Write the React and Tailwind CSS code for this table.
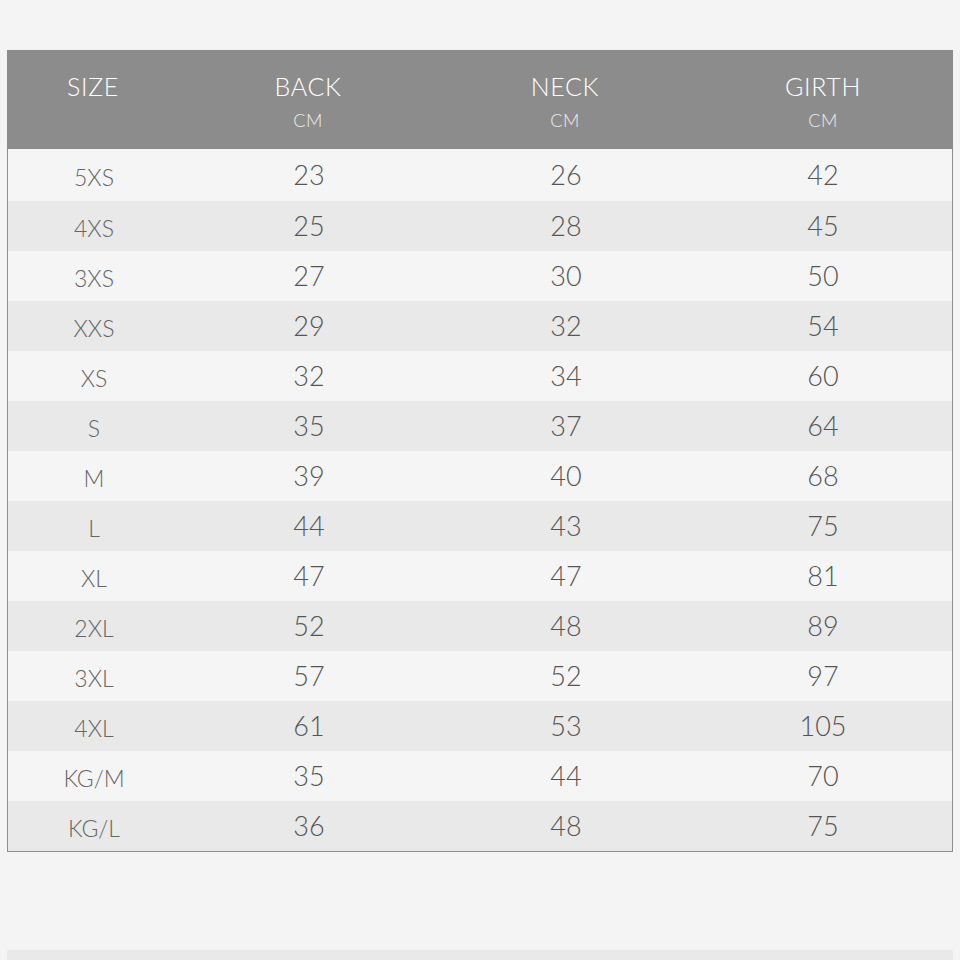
import React from 'react';

const rows = [
  ['5XS', 23, 26, 42],
  ['4XS', 25, 28, 45],
  ['3XS', 27, 30, 50],
  ['XXS', 29, 32, 54],
  ['XS', 32, 34, 60],
  ['S', 35, 37, 64],
  ['M', 39, 40, 68],
  ['L', 44, 43, 75],
  ['XL', 47, 47, 81],
  ['2XL', 52, 48, 89],
  ['3XL', 57, 52, 97],
  ['4XL', 61, 53, 105],
  ['KG/M', 35, 44, 70],
  ['KG/L', 36, 48, 75],
];

const cols = 'grid grid-cols-[172px_258px_256px_1fr]';

export default function App() {
  return (
    <div className="w-[960px] h-[960px] bg-[#f4f4f4] pt-[50px] px-[7px] overflow-hidden font-['Lato',sans-serif]">
      <div className="w-[946px] border-x border-b border-[#8e8e8e]">
        {/* header */}
        <div className={`${cols} h-[99px] bg-[#8c8c8c] text-white -mx-px`}>
          <div className="flex justify-center pt-[20px] text-[25px] font-light leading-[32px] tracking-wide">SIZE</div>
          {['BACK', 'NECK', 'GIRTH'].map((h) => (
            <div key={h} className="flex flex-col items-center pt-[20px]">
              <span className="text-[25px] font-light leading-[32px] tracking-wide">{h}</span>
              <span className="text-[18px] font-light leading-[20px] mt-[8px] text-[#ececec] tracking-wide">CM</span>
            </div>
          ))}
        </div>

        {/* rows */}
        {rows.map((r, i) => (
          <div
            key={r[0]}
            className={`${cols} ${i === 0 ? 'h-[52px]' : 'h-[50px]'} items-center ${i % 2 === 0 ? 'bg-[#f5f5f5]' : 'bg-[#e9e9e9]'}`}
          >
            <div className="text-center text-[23px] font-light text-[#666] pt-[4px]">{r[0]}</div>
            <div className="text-center text-[27px] font-light text-[#555]">{r[1]}</div>
            <div className="text-center text-[27px] font-light text-[#555]">{r[2]}</div>
            <div className="text-center text-[27px] font-light text-[#555]">{r[3]}</div>
          </div>
        ))}
      </div>

      <div className="mt-[98px] w-[946px] h-[12px] bg-[#e9e9e9] rounded-t-[2px]" />
    </div>
  );
}
